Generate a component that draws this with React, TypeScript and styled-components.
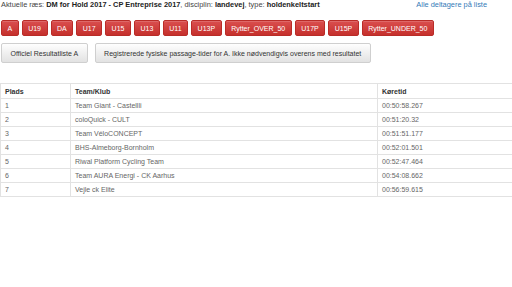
import React from "react";
import styled, { createGlobalStyle } from "styled-components";

const GlobalStyle = createGlobalStyle`
  html, body {
    margin: 0;
    padding: 0;
    background: #fff;
    overflow: hidden;
  }
  body {
    font-family: "Liberation Sans", Arial, Helvetica, sans-serif;
    font-size: 7px;
    color: #333;
  }
`;

const Page = styled.div`
  display: flex;
  flex-direction: column;
  padding: 0 0 0 1px;
`;

const InfoBar = styled.div`
  display: flex;
  justify-content: space-between;
  align-items: center;
  height: 10px;
  line-height: 10px;
  font-size: 7.4px;
  color: #444;
`;

const InfoText = styled.span`
  b {
    color: #222;
  }
`;

const AllLink = styled.a`
  color: #337ab7;
  text-decoration: none;
  margin-right: 25px;
`;

const ClassBar = styled.div`
  display: flex;
  gap: 3px;
  margin-top: 10px;
`;

const ClassButton = styled.button`
  height: 16px;
  padding: 0 5.5px;
  font-family: inherit;
  font-size: 7px;
  color: #fff;
  background: linear-gradient(#da4f4f, #c5302c);
  border: 1px solid #b92c28;
  border-radius: 2px;
  box-shadow: inset 0 1px 0 rgba(255, 255, 255, 0.15);
  cursor: pointer;
`;

const ActionBar = styled.div`
  display: flex;
  gap: 7px;
  margin-top: 7px;
`;

const ActionButton = styled.button`
  height: 20px;
  padding: 0 8.5px;
  font-family: inherit;
  font-size: 7px;
  color: #333;
  background: linear-gradient(#fefefe, #e2e2e2);
  border: 1px solid #cfcfcf;
  border-radius: 2px;
  cursor: pointer;
`;

const ResultTable = styled.table`
  margin-top: 20px;
  margin-left: -1px;
  width: 514px;
  border-collapse: collapse;
  table-layout: fixed;
`;

const HeadCell = styled.th<{ w?: number }>`
  box-sizing: border-box;
  width: ${({ w }) => (w ? `${w}px` : "auto")};
  height: 15px;
  padding: 0 4px;
  text-align: left;
  font-weight: bold;
  color: #333;
  border: 1px solid #e2e2e2;
`;

const Cell = styled.td`
  box-sizing: border-box;
  height: 14px;
  padding: 0 4px;
  color: #666;
  border: 1px solid #e2e2e2;
`;

const classes = [
  "A",
  "U19",
  "DA",
  "U17",
  "U15",
  "U13",
  "U11",
  "U13P",
  "Rytter_OVER_50",
  "U17P",
  "U15P",
  "Rytter_UNDER_50",
];

const results = [
  { place: 1, team: "Team Giant - Castellli", time: "00:50:58.267" },
  { place: 2, team: "coloQuick - CULT", time: "00:51:20.32" },
  { place: 3, team: "Team VéloCONCEPT", time: "00:51:51.177" },
  { place: 4, team: "BHS-Almeborg-Bornholm", time: "00:52:01.501" },
  { place: 5, team: "Riwal Platform Cycling Team", time: "00:52:47.464" },
  { place: 6, team: "Team AURA Energi - CK Aarhus", time: "00:54:08.662" },
  { place: 7, team: "Vejle ck Elite", time: "00:56:59.615" },
];

export default function App() {
  return (
    <>
      <GlobalStyle />
      <Page>
        <InfoBar>
          <InfoText>
            Aktuelle ræs: <b>DM for Hold 2017 - CP Entreprise 2017</b>, disciplin:{" "}
            <b>landevej</b>, type: <b>holdenkeltstart</b>
          </InfoText>
          <AllLink href="#">Alle deltagere på liste</AllLink>
        </InfoBar>
        <ClassBar>
          {classes.map((c) => (
            <ClassButton key={c}>{c}</ClassButton>
          ))}
        </ClassBar>
        <ActionBar>
          <ActionButton>Officiel Resultatliste A</ActionButton>
          <ActionButton>
            Registrerede fysiske passage-tider for A. Ikke nødvendigvis overens med resultatet
          </ActionButton>
        </ActionBar>
        <ResultTable>
          <thead>
            <tr>
              <HeadCell w={70}>Plads</HeadCell>
              <HeadCell w={307}>Team/Klub</HeadCell>
              <HeadCell>Køretid</HeadCell>
            </tr>
          </thead>
          <tbody>
            {results.map((r) => (
              <tr key={r.place}>
                <Cell>{r.place}</Cell>
                <Cell>{r.team}</Cell>
                <Cell>{r.time}</Cell>
              </tr>
            ))}
          </tbody>
        </ResultTable>
      </Page>
    </>
  );
}
